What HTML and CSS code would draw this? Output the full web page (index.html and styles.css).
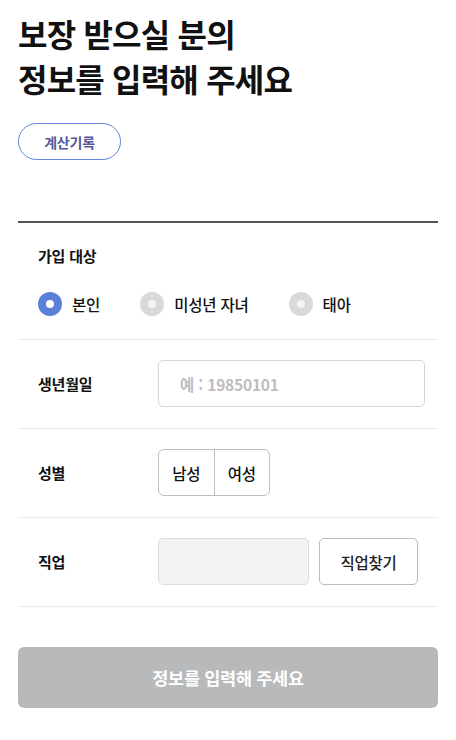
FILE: index.html
```html
<!DOCTYPE html>
<html lang="ko">
<head>
<meta charset="utf-8">
<link rel="stylesheet" href="styles.css">
</head>
<body>
<main class="page">
  <h1 class="title">보장 받으실 분의<br>정보를 입력해 주세요</h1>
  <button class="history-btn" type="button">계산기록</button>

  <section class="form">
    <div class="target">
      <div class="target-label">가입 대상</div>
      <div class="radios">
        <label class="radio"><span class="dot on"></span><span>본인</span></label>
        <label class="radio"><span class="dot"></span><span>미성년 자녀</span></label>
        <label class="radio"><span class="dot"></span><span>태아</span></label>
      </div>
    </div>

    <div class="row">
      <div class="row-label">생년월일</div>
      <div class="input birth">예 : 19850101</div>
    </div>

    <div class="row">
      <div class="row-label">성별</div>
      <div class="seg">
        <span class="seg-item">남성</span>
        <span class="seg-item">여성</span>
      </div>
    </div>

    <div class="row">
      <div class="row-label">직업</div>
      <div class="job-box"></div>
      <button class="job-btn" type="button">직업찾기</button>
    </div>
  </section>

  <button class="submit" type="button">정보를 입력해 주세요</button>
</main>
</body>
</html>
```

FILE: styles.css
```css
* { box-sizing: border-box; }
html, body { margin: 0; padding: 0; background: #fff; }
body {
  font-family: "Noto Sans CJK KR", "Noto Sans", sans-serif;
  color: #111;
}
.page {
  padding: 11px 18px 0;
}
.title {
  margin: 0;
  font-size: 32px;
  line-height: 45px;
  font-weight: 700;
  letter-spacing: -0.8px;
  color: #111;
}
.history-btn {
  margin-top: 22px;
  width: 103px;
  height: 37px;
  border: 1px solid #5f83dc;
  border-radius: 19px;
  background: #fff;
  color: #55589a;
  font-family: inherit;
  font-size: 14px;
  font-weight: 700;
  letter-spacing: -0.2px;
  padding: 0;
  display: flex;
  align-items: center;
  justify-content: center;
}
.form {
  margin-top: 61px;
  border-top: 2px solid #555;
}
.target {
  padding: 22px 20px 23px;
  border-bottom: 1px solid #ebebeb;
}
.target-label {
  font-size: 15px;
  line-height: 22px;
  font-weight: 700;
  letter-spacing: -0.2px;
}
.radios {
  margin-top: 25px;
  display: flex;
  gap: 40px;
}
.radio {
  display: flex;
  align-items: center;
  gap: 10px;
  font-size: 15.5px;
  line-height: 24px;
  font-weight: 500;
  letter-spacing: -0.2px;
}
.dot {
  width: 24px;
  height: 24px;
  border-radius: 50%;
  background: #d8d9db;
  display: flex;
  align-items: center;
  justify-content: center;
}
.dot::after {
  content: "";
  width: 8px;
  height: 8px;
  border-radius: 50%;
  background: #f4f4f5;
}
.dot.on { background: #5b80d8; }
.dot.on::after { background: #fff; }

.row {
  display: flex;
  align-items: center;
  padding: 20px 0 21px 20px;
  border-bottom: 1px solid #ebebeb;
}
.row-label {
  width: 120px;
  font-size: 15px;
  font-weight: 700;
  letter-spacing: -0.2px;
}
.input {
  height: 47px;
  border: 1px solid #d6d6d8;
  border-radius: 5px;
  display: flex;
  align-items: center;
}
.birth {
  width: 267px;
  padding-left: 21px;
  color: #bdbdbf;
  font-size: 15.5px;
  font-weight: 700;
  letter-spacing: -0.2px;
}
.seg {
  display: flex;
  height: 47px;
  width: 112px;
  border: 1px solid #bdbdbf;
  border-radius: 6px;
}
.seg-item {
  flex: 1;
  display: flex;
  align-items: center;
  justify-content: center;
  font-size: 15.5px;
  font-weight: 500;
  letter-spacing: -0.3px;
}
.seg-item + .seg-item { border-left: 1px solid #bdbdbf; }
.job-box {
  width: 151px;
  height: 47px;
  background: #f2f3f5;
  border: 1px solid #dcdcde;
  border-radius: 5px;
}
.job-btn {
  margin-left: 10px;
  width: 99px;
  height: 47px;
  border: 1px solid #bcbcbe;
  border-radius: 5px;
  background: #fff;
  color: #222;
  font-family: inherit;
  font-size: 15.5px;
  font-weight: 500;
  letter-spacing: -0.3px;
  padding: 0;
}
.submit {
  margin-top: 40px;
  width: 100%;
  height: 61px;
  border: 0;
  border-radius: 6px;
  background: #b8b9bb;
  color: #fff;
  font-family: inherit;
  font-size: 17.5px;
  font-weight: 700;
  letter-spacing: -0.3px;
  padding: 0;
}
```
